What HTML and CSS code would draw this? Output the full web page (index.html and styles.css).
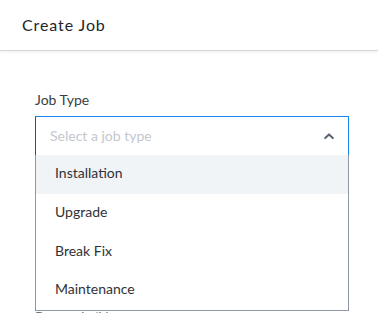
FILE: index.html
```html
<!DOCTYPE html>
<html>
<head>
<meta charset="utf-8">
<link rel="stylesheet" href="styles.css">
</head>
<body>
<header class="header">
  <h1 class="title">Create Job</h1>
</header>
<main class="content">
  <div class="field">
    <label class="label">Job Type</label>
    <div class="select-wrap">
      <div class="select">
        <span class="placeholder">Select a job type</span>
        <svg class="chevron" width="10" height="6" viewBox="0 0 10 6"><path d="M1.2 5 L5 1.4 L8.8 5" fill="none" stroke="#5b6475" stroke-width="2" stroke-linecap="round" stroke-linejoin="round"/></svg>
      </div>
      <ul class="menu">
        <li class="item active">Installation</li>
        <li class="item">Upgrade</li>
        <li class="item">Break Fix</li>
        <li class="item">Maintenance</li>
      </ul>
    </div>
  </div>
  <div class="field next">
    <label class="label">Postcode/Name</label>
  </div>
</main>
</body>
</html>
```
FILE: styles.css
```css
* { box-sizing: border-box; }
html, body { margin: 0; padding: 0; background: #fff; }
body {
  font-family: Lato, "Open Sans", sans-serif;
  color: #2b2e33;
  width: 378px;
  height: 313px;
  overflow: hidden;
}
.header {
  height: 51px;
  border-bottom: 1px solid #d5d8de;
  box-shadow: 0 1px 3px rgba(0, 0, 0, 0.08);
  display: flex;
  align-items: center;
  padding-left: 22px;
}
.title {
  margin: 0;
  font-size: 16px;
  font-weight: 400;
  letter-spacing: 0.9px;
  color: #23262b;
  padding-bottom: 2px;
}
.content {
  padding: 40px 29px 0 35px;
}
.label {
  display: block;
  font-size: 14px;
  color: #3a3d42;
  line-height: 18px;
  margin-bottom: 7px;
}
.select-wrap {
  position: relative;
}
.select {
  height: 40px;
  border: 1px solid #1a86f0;
  border-left-color: #a3242c;
  display: flex;
  align-items: center;
  justify-content: space-between;
  padding: 0 14px 2px 14px;
}
.placeholder {
  font-size: 14px;
  color: #c3c7ce;
}
.chevron { display: block; margin-top: 1px; }
.menu {
  position: absolute;
  top: 39px;
  left: 0;
  right: 0;
  margin: 0;
  padding: 0;
  list-style: none;
  background: #fff;
  border: 1px solid #8e98a8;
  border-top: none;
  z-index: 2;
}
.item {
  height: 39px;
  display: flex;
  align-items: center;
  padding: 0 0 5px 19px;
  font-size: 14px;
  color: #2f3237;
}
.item:last-child { height: 38px; }
.item.active { background: #f1f4f7; }
.next { margin-top: 152px; }
.next .label { color: #6b7079; }
```
